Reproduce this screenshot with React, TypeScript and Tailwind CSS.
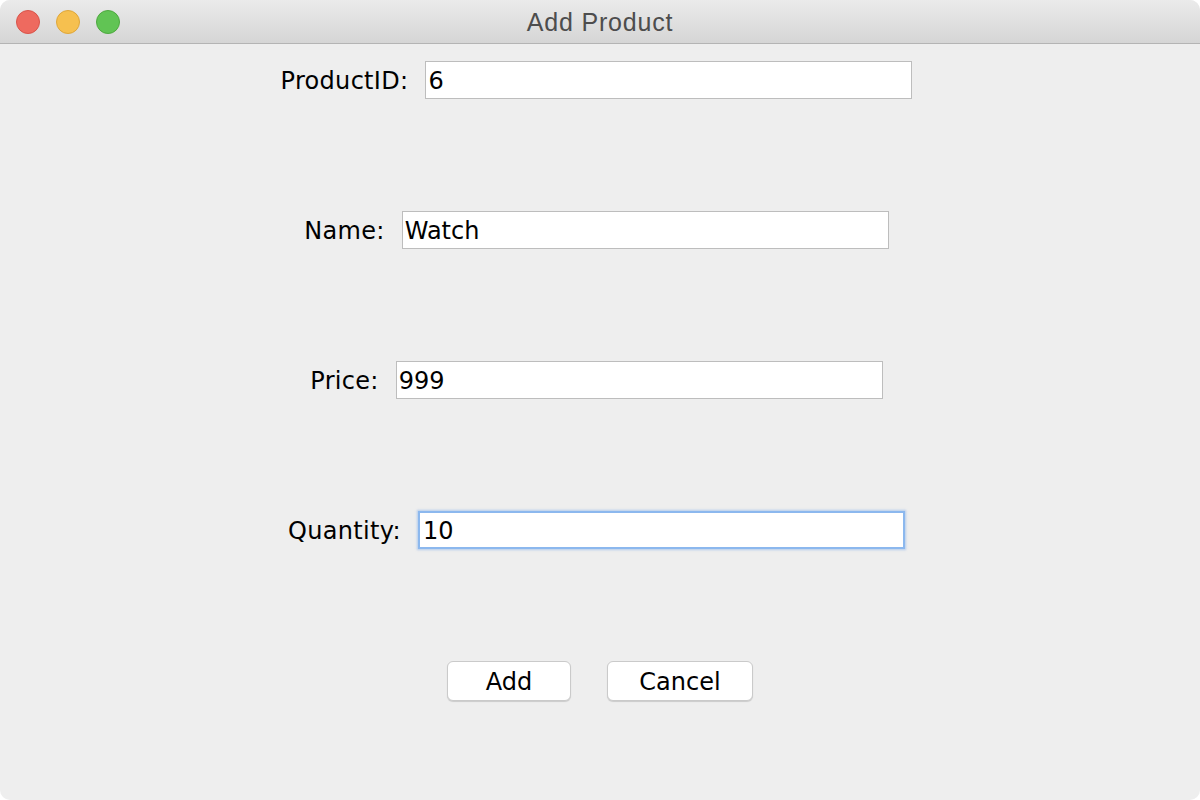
import React from "react";

const font = { fontFamily: '"DejaVu Sans", "Open Sans", sans-serif' };

function Row({ label, value, focused }: { label: string; value: string; focused?: boolean }) {
  return (
    <div className="flex items-center justify-center gap-[17px] h-[38px] pr-[7px]">
      <span className="text-[24px] text-black leading-none tracking-[0.3px] pt-[2px]" style={font}>{label}</span>
      <div
        className={
          "w-[487px] h-[38px] bg-white flex items-center pt-[2px] " +
          (focused
            ? "pl-[3px] border-2 border-[#8cb8ee] shadow-[0_0_2px_1px_rgba(120,170,235,0.5)]"
            : "pl-[2px] border border-[#bdbdbd]")
        }
      >
        <span className="text-[24px] text-black leading-none" style={font}>{value}</span>
      </div>
    </div>
  );
}

export default function App() {
  return (
    <div className="w-[1200px] h-[800px] bg-white">
      <div className="w-[1200px] h-[800px] rounded-[10px] overflow-hidden bg-[#eeeeee] flex flex-col">
        <div className="h-[44px] shrink-0 relative flex items-center justify-center bg-gradient-to-b from-[#ebebeb] to-[#d5d5d5] border-b border-[#b4b4b4]">
          <div className="absolute left-[16px] top-[10px] flex gap-[16px]">
            <div className="w-[24px] h-[24px] rounded-full bg-[#ee6a5f] border border-[#d8544a]" />
            <div className="w-[24px] h-[24px] rounded-full bg-[#f6c04f] border border-[#dea63a]" />
            <div className="w-[24px] h-[24px] rounded-full bg-[#61c454] border border-[#4ea83f]" />
          </div>
          <span
            className="text-[25px] text-[#4d4d4d] tracking-[0.8px] pt-[2px]"
            style={{ fontFamily: '"Liberation Sans", Arial, sans-serif' }}
          >
            Add Product
          </span>
        </div>
        <div className="flex flex-col pt-[17px] gap-[112px]">
          <Row label="ProductID:" value="6" />
          <Row label="Name:" value="Watch" />
          <Row label="Price:" value="999" />
          <Row label="Quantity:" value="10" focused />
          <div className="flex justify-center gap-[36px]">
            <button
              className="w-[124px] h-[40px] bg-white rounded-[6px] border border-[#cacaca] shadow-[0_1px_1px_rgba(0,0,0,0.15)] text-[24px] text-black leading-none pt-[2px]"
              style={font}
            >
              Add
            </button>
            <button
              className="w-[146px] h-[40px] bg-white rounded-[6px] border border-[#cacaca] shadow-[0_1px_1px_rgba(0,0,0,0.15)] text-[24px] text-black leading-none pt-[2px]"
              style={font}
            >
              Cancel
            </button>
          </div>
        </div>
      </div>
    </div>
  );
}
